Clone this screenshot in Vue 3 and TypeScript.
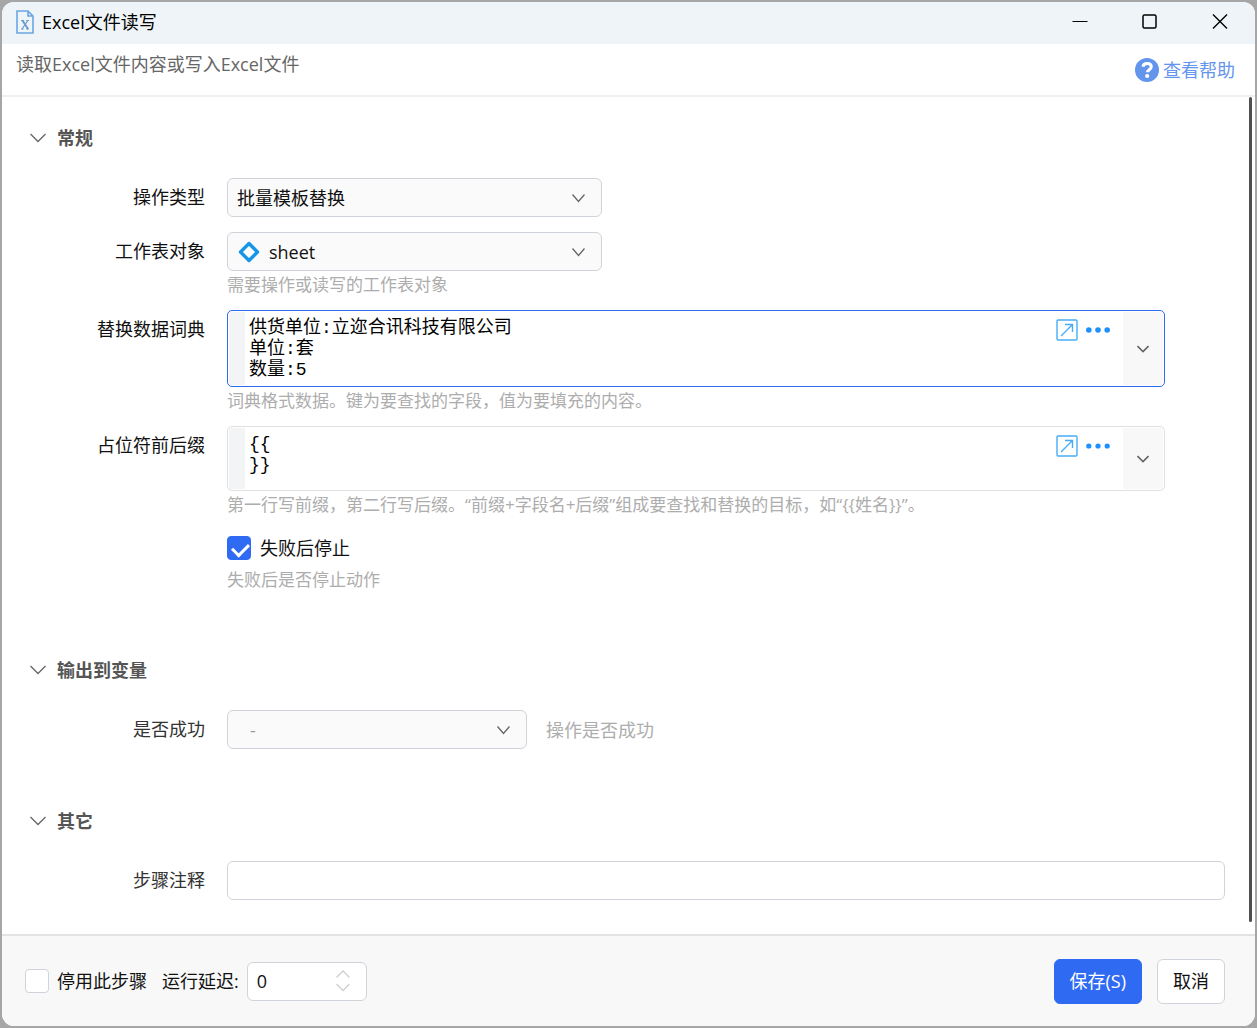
<script setup lang="ts">
import { ref } from 'vue'

const operation = ref('批量模板替换')
const sheet = ref('sheet')
const dictionary = ref('供货单位:立迩合讯科技有限公司\n单位:套\n数量:5')
const affixes = ref('{{\n}}')
const stopOnFail = ref(true)
const result = ref('-')
const comment = ref('')
const disabledStep = ref(false)
const delay = ref('0')
const affixHint = '第一行写前缀，第二行写后缀。“前缀+字段名+后缀”组成要查找和替换的目标，如“{{姓名}}”。'
</script>

<template>
  <div class="desktop">
    <main class="window">
      <header class="titlebar">
        <svg class="file-icon" width="18" height="24" viewBox="0 0 18 24" fill="none" stroke="#6ba5e3" stroke-width="1.6">
          <path d="M1 1h11l5 5v17H1zM12 1v5h5" />
          <path d="M6.500 10.500L12 19" stroke="#6b9bd0" stroke-width="2" />
          <path d="M11.800 10.500L6 19M5 10.500h3M10.300 10.500h2.700M5 19h2.700M10 19h3" stroke="#6b9bd0" stroke-width="1.200" />
        </svg>
        <h1>Excel文件读写</h1>
        <div class="window-buttons">
          <button type="button" aria-label="最小化">
            <svg width="16" height="16" viewBox="0 0 16 16"><path d="M0.500 7.500h15" /></svg>
          </button>
          <button type="button" aria-label="最大化">
            <svg width="16" height="16" viewBox="0 0 16 16"><rect x="1" y="1" width="13" height="13" rx="1.500" stroke-width="1.500" /></svg>
          </button>
          <button type="button" aria-label="关闭">
            <svg width="16" height="16" viewBox="0 0 16 16"><path d="M1 0.500l14 14M15 0.500L1 14.500" stroke-width="1.400" /></svg>
          </button>
        </div>
      </header>

      <div class="intro">
        <p>读取Excel文件内容或写入Excel文件</p>
        <a class="help" href="#">
          <svg width="24" height="24" viewBox="0 0 24 24">
            <circle cx="12" cy="12" r="12" fill="#6495ed" />
            <path d="M8 8.700c.3-2.200 2-3.200 4.200-3.200 2.400 0 4.100 1.200 4.100 3.300 0 2.800-3.900 2.900-3.900 5.500" fill="none" stroke="#fff" stroke-width="3" />
            <circle cx="12.200" cy="18" r="2.100" fill="#fff" />
          </svg>
          <span>查看帮助</span>
        </a>
      </div>

      <div class="body">
        <section class="general">
          <h2>
            <svg width="16" height="10" viewBox="0 0 16 10"><path d="M0.500 1l7.500 7.500L15.500 1" /></svg>
            常规
          </h2>
          <div class="row">
            <label for="operation">操作类型</label>
            <div class="select">
              <select id="operation" v-model="operation"><option>批量模板替换</option></select>
              <svg class="arrow" width="14" height="9" viewBox="0 0 14 9"><path d="M0.500 0.500l6 7 6-7" /></svg>
            </div>
          </div>
          <div class="row">
            <label for="sheet">工作表对象</label>
            <div>
              <div class="select with-icon">
                <svg class="lead" width="22" height="22" viewBox="0 0 22 22"><path d="M11 2.500l8.500 8.500-8.500 8.500L2.500 11z" fill="#fff" stroke="#1597e5" stroke-width="3.400" stroke-linejoin="round" /></svg>
                <select id="sheet" v-model="sheet"><option>sheet</option></select>
                <svg class="arrow" width="14" height="9" viewBox="0 0 14 9"><path d="M0.500 0.500l6 7 6-7" /></svg>
              </div>
              <p class="hint">需要操作或读写的工作表对象</p>
            </div>
          </div>
          <div class="row">
            <label for="dictionary">替换数据词典</label>
            <div>
              <div class="editor active">
                <span class="gutter"></span>
                <textarea id="dictionary" v-model="dictionary" rows="3" spellcheck="false"></textarea>
                <div class="tools">
                  <button type="button" aria-label="展开编辑">
                    <svg width="22" height="22" viewBox="0 0 22 22"><rect x="1" y="1" width="20" height="20" rx="1" /><path d="M5 17L16 6M9 5.500h7.500V13" /></svg>
                  </button>
                  <button type="button" aria-label="更多">
                    <svg class="dots" width="24" height="22" viewBox="0 0 24 22"><circle cx="2.800" cy="11" r="2.800" /><circle cx="12" cy="11" r="2.800" /><circle cx="21.200" cy="11" r="2.800" /></svg>
                  </button>
                </div>
                <button class="toggle" type="button" aria-label="下拉">
                  <svg width="12" height="8" viewBox="0 0 12 8"><path d="M0.500 1L6 6.500 11.500 1" /></svg>
                </button>
              </div>
              <p class="hint">词典格式数据。键为要查找的字段，值为要填充的内容。</p>
            </div>
          </div>
          <div class="row">
            <label for="affixes">占位符前后缀</label>
            <div>
              <div class="editor">
                <span class="gutter"></span>
                <textarea id="affixes" v-model="affixes" rows="2" spellcheck="false"></textarea>
                <div class="tools">
                  <button type="button" aria-label="展开编辑">
                    <svg width="22" height="22" viewBox="0 0 22 22"><rect x="1" y="1" width="20" height="20" rx="1" /><path d="M5 17L16 6M9 5.500h7.500V13" /></svg>
                  </button>
                  <button type="button" aria-label="更多">
                    <svg class="dots" width="24" height="22" viewBox="0 0 24 22"><circle cx="2.800" cy="11" r="2.600" /><circle cx="12" cy="11" r="2.600" /><circle cx="21.200" cy="11" r="2.600" /></svg>
                  </button>
                </div>
                <button class="toggle" type="button" aria-label="下拉">
                  <svg width="12" height="8" viewBox="0 0 12 8"><path d="M0.500 1L6 6.500 11.500 1" /></svg>
                </button>
              </div>
              <p class="hint">{{ affixHint }}</p>
            </div>
          </div>
          <div class="row">
            <span></span>
            <div>
              <label class="check" for="stop"><input id="stop" v-model="stopOnFail" type="checkbox" />失败后停止</label>
              <p class="hint">失败后是否停止动作</p>
            </div>
          </div>
        </section>

        <section>
          <h2>
            <svg width="16" height="10" viewBox="0 0 16 10"><path d="M0.500 1l7.500 7.500L15.500 1" /></svg>
            输出到变量
          </h2>
          <div class="row soft">
            <label for="result">是否成功</label>
            <div class="output">
              <div class="select narrow">
                <select id="result" v-model="result"><option>-</option></select>
                <svg class="arrow" width="14" height="9" viewBox="0 0 14 9"><path d="M0.500 0.500l6 7 6-7" /></svg>
              </div>
              <span class="note">操作是否成功</span>
            </div>
          </div>
        </section>

        <section>
          <h2>
            <svg width="16" height="10" viewBox="0 0 16 10"><path d="M0.500 1l7.500 7.500L15.500 1" /></svg>
            其它
          </h2>
          <div class="row soft">
            <label for="comment">步骤注释</label>
            <input id="comment" v-model="comment" class="comment" type="text" />
          </div>
        </section>
        <span class="scrollbar"></span>
      </div>

      <footer>
        <label class="check" for="disable"><input id="disable" v-model="disabledStep" type="checkbox" />停用此步骤</label>
        <label class="delay-label" for="delay">运行延迟:</label>
        <div class="delay">
          <input id="delay" v-model="delay" type="text" inputmode="numeric" />
          <svg width="14" height="22" viewBox="0 0 14 22"><path d="M0.500 7.500L7 1l6.500 6.500M0.500 14L7 20.500l6.500-6.500" /></svg>
        </div>
        <span class="spacer"></span>
        <button class="save" type="button">保存(S)</button>
        <button class="cancel" type="button">取消</button>
      </footer>
    </main>
  </div>
</template>

<style>
body {
  background: #a9a9a9;
}
</style>

<style scoped>
* {
  box-sizing: border-box;
}

.desktop {
  display: flex;
  min-height: 100vh;
  padding: 2px;
  background: #a6a6a6;
  color: #111;
  font: 400 18px/24px "Open Sans", "Noto Sans CJK SC", sans-serif;
}

h1,
h2,
p {
  margin: 0;
}

input,
select,
textarea,
button {
  font: inherit;
  color: inherit;
  margin: 0;
  outline: none;
}

button {
  padding: 0;
  border: 0;
  background: none;
}

svg {
  display: block;
  flex: none;
}

.window {
  display: flex;
  flex: 1;
  flex-direction: column;
  min-width: 0;
  overflow: hidden;
  border-radius: 12px;
  background: #fff;
}

.titlebar {
  display: flex;
  align-items: center;
  height: 42px;
  padding: 0 0 2px 14px;
  background: #eef4f7;
}

.titlebar h1 {
  flex: 1;
  margin-left: 8px;
  color: #000;
  font-size: 18px;
  font-weight: inherit;
}

.window-buttons {
  display: flex;
}

.window-buttons button {
  display: flex;
  align-items: center;
  justify-content: center;
  width: 70px;
  height: 40px;
}

.window-buttons svg {
  fill: none;
  stroke: #000;
}

.intro {
  display: flex;
  justify-content: space-between;
  height: 53px;
  padding: 8px 20px 0 14px;
  border-bottom: 2px solid #efefef;
  color: #666;
}

.help {
  display: flex;
  align-items: center;
  gap: 4px;
  height: 36px;
  color: #6495ed;
  text-decoration: none;
}

.body {
  position: relative;
  flex: 1;
  padding: 29px 30px 0 28px;
}

.scrollbar {
  position: absolute;
  top: 0;
  right: 3px;
  bottom: 12px;
  width: 3px;
  border-radius: 2px;
  background: #505050;
}

section {
  margin-bottom: 60px;
}

section:last-of-type {
  margin-bottom: 33px;
}

.general {
  padding-bottom: 8px;
}

h2 {
  display: flex;
  align-items: center;
  gap: 11px;
  margin-bottom: 28px;
  color: #555;
  font-size: 18px;
  font-weight: 700;
}

h2 svg {
  fill: none;
  stroke: #666;
  stroke-width: 1.3;
}

.row {
  display: grid;
  grid-template-columns: 175px minmax(0, 1fr);
  column-gap: 22px;
  margin-bottom: 15px;
}

.row:last-child {
  margin-bottom: 0;
}

.row > label {
  line-height: 39px;
  text-align: right;
}

.soft {
  color: #333;
}

.hint {
  margin-top: 4px;
  color: #adadad;
  font-size: 17px;
  line-height: 20px;
}

.select {
  position: relative;
  width: 375px;
}

.narrow {
  width: 300px;
}

select {
  display: block;
  width: 100%;
  height: 39px;
  padding: 0 40px 0 9px;
  border: 1px solid #ced4da;
  border-radius: 6px;
  background: #fafafa;
  appearance: none;
}

.with-icon select {
  padding-left: 41px;
}

.narrow select {
  padding-left: 22px;
  color: #999;
}

.lead {
  position: absolute;
  top: 9px;
  left: 11px;
}

.arrow {
  position: absolute;
  top: 16px;
  right: 16px;
  fill: none;
  stroke: #666;
  stroke-width: 1.3;
}

.editor {
  display: flex;
  min-height: 65px;
  margin-right: 60px;
  overflow: hidden;
  border: 1px solid #e0e0e0;
  border-radius: 5px;
  background: #fff;
}

.active {
  border-color: #2f6bf2;
}

.gutter {
  width: 16px;
  margin: 1px 0 1px 1px;
  background: #f3f4f6;
}

textarea {
  flex: 1;
  min-width: 0;
  padding: 7px 4px 5px;
  overflow: hidden;
  border: 0;
  background: none;
  color: #000;
  font-family: "Liberation Mono", "Noto Sans CJK SC", monospace;
  line-height: 21px;
  resize: none;
}

.tools {
  display: flex;
  gap: 8px;
  align-items: flex-start;
  padding: 8px 13px 0 0;
}

.tools svg {
  fill: none;
  stroke: #46adf5;
  stroke-width: 1.4;
}

.tools .dots {
  fill: #1e90ff;
  stroke: none;
}

.toggle {
  display: flex;
  align-items: center;
  justify-content: center;
  width: 40px;
  margin: 1px 1px 1px 0;
  background: #f8f8f8;
}

.toggle svg {
  fill: none;
  stroke: #666;
  stroke-width: 1.6;
}

.check {
  display: flex;
  align-items: center;
  gap: 9px;
  height: 36px;
}

.check input {
  width: 24px;
  height: 24px;
  border: 1px solid #ced4da;
  border-radius: 4px;
  background: #fff;
  appearance: none;
}

.check input:checked {
  position: relative;
  border-color: #2f6bf2;
  background: #2f6bf2;
}

.check input:checked::after {
  content: "";
  position: absolute;
  top: 3px;
  left: 7px;
  width: 8px;
  height: 13px;
  border: solid #fff;
  border-width: 0 3px 3px 0;
  transform: rotate(45deg);
}

.output {
  display: flex;
  align-items: center;
  gap: 19px;
}

.note {
  color: #adadad;
}

.comment {
  width: 100%;
  height: 39px;
  padding: 0 10px;
  border: 1px solid #ced4da;
  border-radius: 6px;
  background: #fff;
}

footer {
  display: flex;
  align-items: center;
  height: 92px;
  padding: 0 30px 0 23px;
  border-top: 2px solid #e3e3e3;
  background: #f8f8f8;
}

footer .check {
  gap: 8px;
}

.delay-label {
  margin: 0 8px 0 15px;
}

.delay {
  display: flex;
  align-items: center;
  width: 120px;
  height: 39px;
  padding: 0 16px 0 9px;
  border: 1px solid #ced4da;
  border-radius: 6px;
  background: #fff;
}

.delay input {
  flex: 1;
  min-width: 0;
  padding: 0;
  border: 0;
  background: none;
}

.delay svg {
  fill: none;
  stroke: #cfcfcf;
  stroke-width: 1.3;
}

.spacer {
  flex: 1;
}

.save,
.cancel {
  height: 45px;
  padding: 0 15px;
  border: 1px solid #2f6bf2;
  border-radius: 6px;
  background: #2f6bf2;
  color: #fff;
}

.cancel {
  margin-left: 15px;
  border-color: #ced4da;
  background: #fff;
  color: #111;
}
</style>
